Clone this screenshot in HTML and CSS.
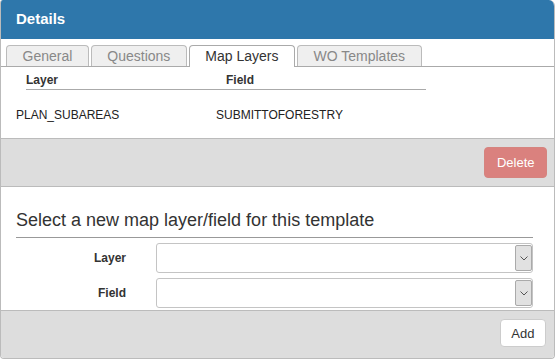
FILE: index.html
```html
<!DOCTYPE html>
<html lang="en">
  <head>
    <meta charset="UTF-8" />
    <meta name="viewport" content="width=device-width, initial-scale=1.0" />
    <title>Details</title>
    <link rel="stylesheet" href="styles.css">
  </head>
  <body>
    <div class="panel">
      <div class="panel-heading">Details</div>

      <div class="panel-body">
        <ul class="tabs">
          <li>General</li>
          <li>Questions</li>
          <li class="active">Map Layers</li>
          <li>WO Templates</li>
        </ul>

        <div class="layer-head">
          <span class="col">Layer</span>
          <span class="col">Field</span>
        </div>
        <div class="layer-row">
          <span class="col">PLAN_SUBAREAS</span>
          <span class="col">SUBMITTOFORESTRY</span>
        </div>
      </div>

      <div class="toolbar">
        <button class="btn btn-danger">Delete</button>
      </div>

      <div class="new-layer">
        <div class="legend">Select a new map layer/field for this template</div>
        <div class="form-row">
          <label>Layer</label>
          <div class="select-box">
            <select></select>
            <span class="select-arrow">
              <svg width="8" height="5" viewBox="0 0 8 5"><path d="M0.5 0.5 L4 4 L7.5 0.5" fill="none" stroke="#555" stroke-width="1"/></svg>
            </span>
          </div>
        </div>
        <div class="form-row">
          <label>Field</label>
          <div class="select-box">
            <select></select>
            <span class="select-arrow">
              <svg width="8" height="5" viewBox="0 0 8 5"><path d="M0.5 0.5 L4 4 L7.5 0.5" fill="none" stroke="#555" stroke-width="1"/></svg>
            </span>
          </div>
        </div>
      </div>

      <div class="toolbar footer">
        <button class="btn btn-default">Add</button>
      </div>
    </div>
  </body>
</html>
```

FILE: styles.css
```css
body {
  font-family: "Liberation Sans", Arial, sans-serif;
  margin: 0;
  padding: 0;
  background: #fff;
  color: #333;
}
.panel {
  width: 555px;
  height: 359px;
  box-sizing: border-box;
  border: 1px solid #bbb;
  border-top: none;
  border-radius: 3px 6px 4px 4px;
  overflow: hidden;
}
.panel-heading {
  height: 39px;
  line-height: 37px;
  padding-left: 16px;
  background: #2e77ab;
  color: #fff;
  font-size: 15px;
  font-weight: bold;
  margin: 0 -1px;
}

.tabs {
  list-style: none;
  display: flex;
  gap: 2px;
  margin: 6px 0 0 0;
  padding: 0 0 0 5px;
  border-bottom: 1px solid #aaa;
}
.tabs li {
  height: 20px;
  line-height: 20px;
  padding: 0 15.5px;
  font-size: 14px;
  color: #888;
  background: #efefef;
  border: 1px solid #bbb;
  border-bottom: none;
  border-radius: 4px 4px 0 0;
}
.tabs li.active {
  background: #fff;
  color: #333;
  border-color: #aaa;
  margin-bottom: -1px;
  height: 21px;
}

.layer-head {
  display: flex;
  width: 400px;
  margin-left: 25px;
  padding: 6px 0 2px;
  line-height: 14px;
  font-size: 12px;
  font-weight: bold;
  border-bottom: 1px solid #aaa;
}
.layer-head .col {
  width: 200px;
}
.layer-row {
  display: flex;
  margin-top: 18px;
  padding: 0 0 16px 15px;
  line-height: 14px;
  font-size: 12px;
  color: #222;
}
.layer-row .col {
  width: 200px;
}

.toolbar {
  display: flex;
  justify-content: flex-end;
  padding: 8px 7px 8px 0;
  background: #ddd;
  border-top: 1px solid #bbb;
  border-bottom: 1px solid #bbb;
}
.toolbar.footer {
  height: 48px;
  box-sizing: border-box;
  border-bottom: none;
  padding-right: 8px;
}
.btn {
  font-family: "Liberation Sans", Arial, sans-serif;
  font-size: 13px;
  border-radius: 4px;
  cursor: pointer;
}
.btn-danger {
  height: 31px;
  padding: 0 11.5px;
  background: #da817e;
  border: 1px solid #d5847f;
  color: #fff;
}
.btn-default {
  height: 28px;
  padding: 0 10.5px;
  background: #fff;
  border: 1px solid #ccc;
  color: #333;
}

.new-layer {
  padding: 23px 21px 2px 15px;
}
.legend {
  font-size: 18px;
  line-height: 20px;
  padding-bottom: 7px;
  border-bottom: 1px solid #999;
  color: #333;
}
.form-row {
  display: flex;
  align-items: center;
  margin-top: 5px;
}
.form-row label {
  width: 110px;
  margin-right: 30px;
  text-align: right;
  font-size: 12px;
  font-weight: bold;
  color: #333;
}
.select-box {
  flex: 1;
  display: flex;
  height: 30px;
  box-sizing: border-box;
  padding: 1px 0;
  border: 1px solid #c4c4c4;
  border-radius: 3px;
  background: #fff;
}
.select-box select {
  flex: 1;
  border: none;
  background: transparent;
  appearance: none;
  outline: none;
}
.select-arrow {
  width: 15px;
  display: flex;
  align-items: center;
  justify-content: center;
  background: #e1e1e1;
  border: 1px solid #aaa;
  border-radius: 2px;
}
```
